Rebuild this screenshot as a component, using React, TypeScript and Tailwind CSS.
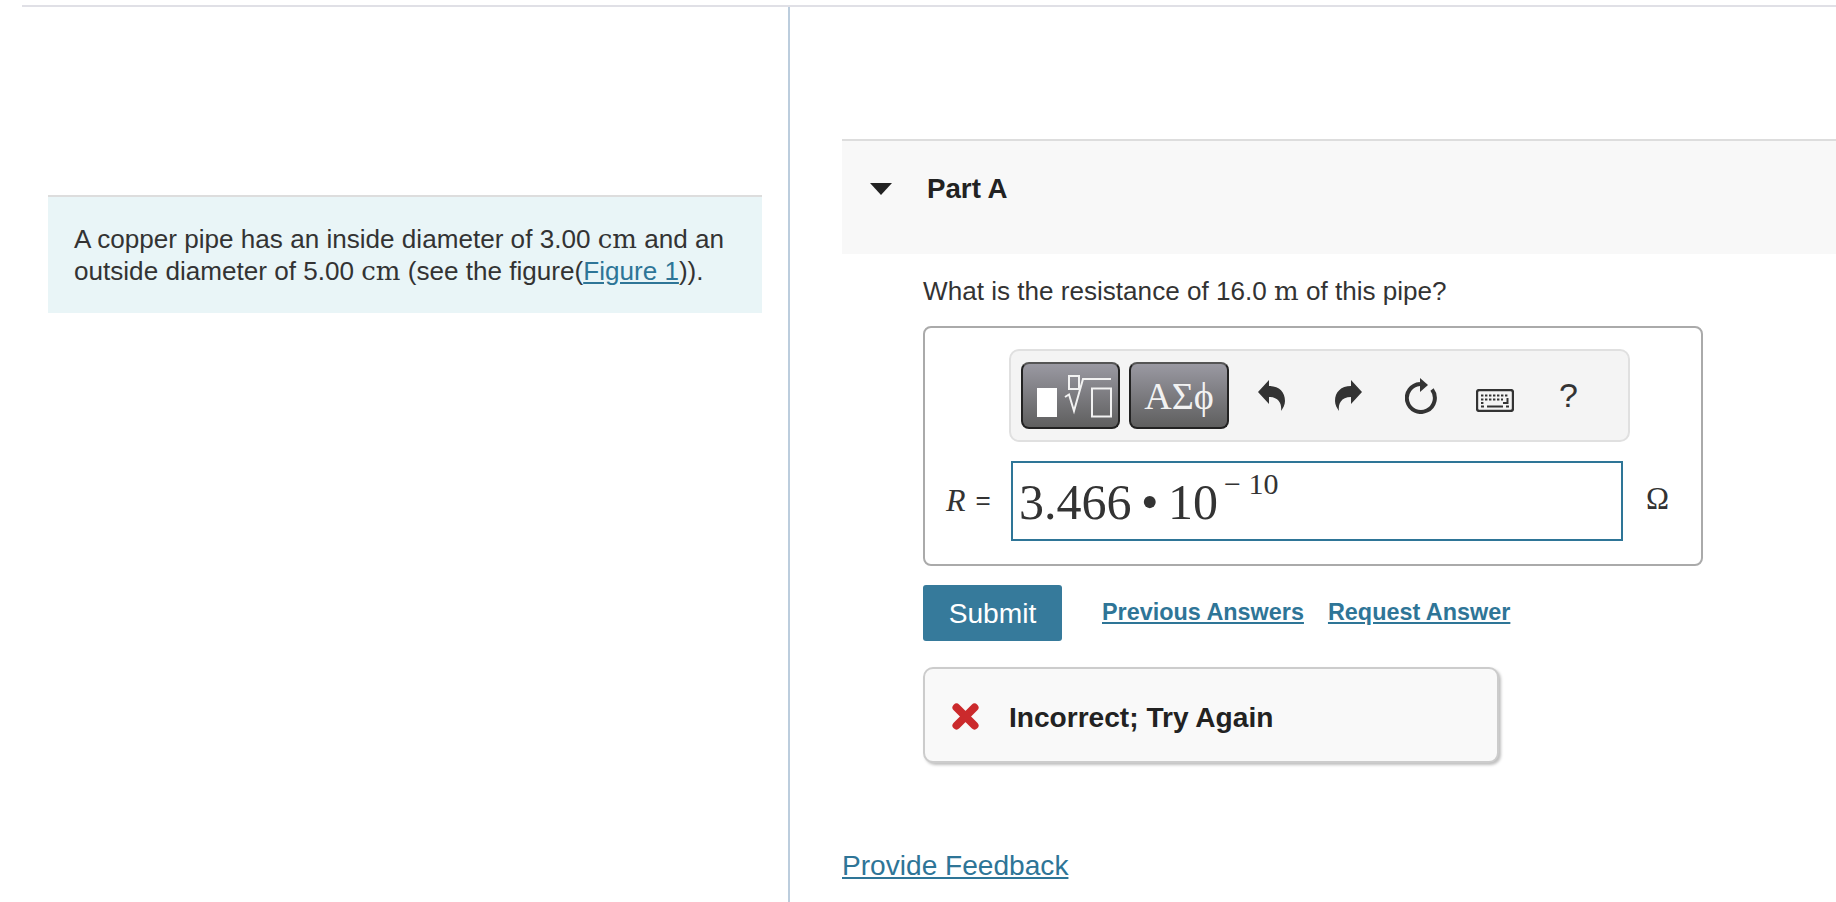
function Undo({ flip }: { flip?: boolean }) {
  return (
    <svg width="27" height="31" viewBox="0 0 27 31" className={flip ? "-scale-x-100" : ""}>
      <path d="M0 12 L11 0 V6 C21 6 27 12 27 21 C27 25 25 28 23 31 C24 24 21 17 11 17 V24 Z" fill="#333" />
    </svg>
  );
}

function Reset() {
  return (
    <svg width="32" height="36" viewBox="0 0 32 36">
      <path d="M15 6 A14 14 0 1 0 27 11.5" fill="none" stroke="#333" strokeWidth="4" />
      <path d="M15 0 L23 7 L15 14 Z" fill="#333" />
    </svg>
  );
}

function Keyboard() {
  return (
    <svg width="38" height="23" viewBox="0 0 38 23">
      <rect x="1" y="1" width="36" height="21" rx="2.5" fill="#f4f4f4" stroke="#333" strokeWidth="2.4" />
      <path d="M5 6.5H33M5 10.5H27M5 14H9" stroke="#333" strokeWidth="2" strokeDasharray="2.4 1.6" fill="none" />
      <path d="M5 17.5H8M11 17.5H27M30 17.5H33" stroke="#333" strokeWidth="2" fill="none" />
      <path d="M31.5 9V14H27" stroke="#333" strokeWidth="2" fill="none" />
    </svg>
  );
}

function Templates() {
  return (
    <svg width="76" height="46" viewBox="0 0 76 46" className="ml-[8px]">
      <rect x="0" y="15" width="20" height="29" fill="#fff" />
      <rect x="32" y="3" width="10" height="13" fill="none" stroke="#f2f2f2" strokeWidth="2" />
      <path d="M28 24 L32 21.5 L37 38 L46 6 H74" fill="none" stroke="#f2f2f2" strokeWidth="2" />
      <rect x="55" y="15.5" width="19" height="28" fill="none" stroke="#f2f2f2" strokeWidth="2" />
    </svg>
  );
}

function CrossMark() {
  return (
    <svg width="27" height="27" viewBox="0 0 27 27" className="mt-[2px]">
      <path d="M4.5 4.5 L22.5 22.5 M22.5 4.5 L4.5 22.5" stroke="#cb2a2c" strokeWidth="8" strokeLinecap="round" />
    </svg>
  );
}

export default function App() {
  return (
    <div className="w-[1836px] h-[902px] overflow-hidden bg-white text-[#333] text-[26.1px] leading-[32px] font-['Liberation_Sans',sans-serif]">
      <div className="ml-[22px] mt-[5px] h-[2px] bg-[#e0e0e6]" />
      <div className="flex h-[895px]">
        <div className="w-[790px] shrink-0 border-r-2 border-[#bccddd] pl-[48px] pt-[188px]">
          <div className="w-[714px] h-[118px] border-t-2 border-[#dddddd] bg-[#e9f5f7] pl-[26px] pt-[26px]">
            <p>
              A copper pipe has an inside diameter of 3.00 <span className="font-['DejaVu_Serif',serif] text-[26px]">cm</span> and an
              <br />
              outside diameter of 5.00 <span className="font-['DejaVu_Serif',serif] text-[26px]">cm</span> (see the figure(
              <a className="text-[#2e7597] underline">Figure 1</a>)).
            </p>
          </div>
        </div>
        <div className="flex-1 pl-[52px] pt-[132px]">
          <div className="h-[115px] border-t-2 border-[#dddddd] bg-[#f8f8f8] flex items-start pt-[32px]">
            <svg width="22" height="12" viewBox="0 0 22 12" className="ml-[28px] mt-[10px]">
              <path d="M0 0 H22 L11 12 Z" fill="#222" />
            </svg>
            <h2 className="ml-[35px] font-bold text-[#222] text-[27.7px]">Part A</h2>
          </div>
          <div className="pl-[81px]">
            <p className="mt-[21px]">
              What is the resistance of 16.0 <span className="font-['DejaVu_Serif',serif] text-[26px]">m</span> of this pipe?
            </p>
            <div className="mt-[19px] w-[780px] h-[240px] rounded-[8px] border-2 border-[#aaaaaa] pt-[21px]">
              <div className="ml-[84px] w-[621px] h-[93px] rounded-[10px] border-2 border-[#e0e0e0] bg-[#f4f4f4] flex items-center pl-[10px]">
                <button className="w-[99px] h-[67px] rounded-[8px] border-2 border-[#222] border-t-[#555] bg-gradient-to-b from-[#9a99a2] to-[#5f5f5f] flex items-center justify-center">
                  <Templates />
                </button>
                <button className="ml-[9px] w-[100px] h-[67px] rounded-[8px] border-2 border-[#222] border-t-[#555] bg-gradient-to-b from-[#9a99a2] to-[#5f5f5f] text-[#f2f2f2] text-[38px] font-['Liberation_Serif',serif]">
                  ΑΣϕ
                </button>
                <div className="ml-[29px] w-[27px] flex"><Undo /></div>
                <div className="ml-[50px] w-[27px] flex"><Undo flip /></div>
                <div className="ml-[43px] w-[32px] flex"><Reset /></div>
                <div className="ml-[39px] mt-[9px] w-[38px] flex"><Keyboard /></div>
                <span className="ml-[45px] mb-[2px] text-[34px]">?</span>
              </div>
              <div className="mt-[19px] flex items-center">
                <span className="ml-[21px] mb-[2px] w-[65px] flex items-center gap-[10px]">
                  <i className="font-['Liberation_Serif',serif] text-[32px]">R</i>
                  <span className="text-[26px]">=</span>
                </span>
                <div className="w-[612px] h-[80px] border-2 border-[#2e7597] pl-[6px] flex items-start font-['Liberation_Serif',serif]">
                  <span className="text-[50px] leading-[60px] mt-[9px] [word-spacing:-3px]">3.466 • 10</span>
                  <span className="text-[30px] leading-[36px] ml-[6px] mt-[3px]">− 10</span>
                </div>
                <span className="ml-[23px] mb-[4px] font-['Liberation_Serif',serif] text-[31px]">Ω</span>
              </div>
            </div>
            <div className="mt-[19px] flex items-center">
              <button className="w-[139px] h-[56px] rounded-[3px] bg-[#367a9b] text-white text-[28.2px]">Submit</button>
              <a className="ml-[40px] mb-[2px] text-[23.4px] font-bold text-[#2e7597] underline">Previous Answers</a>
              <a className="ml-[24px] mb-[2px] text-[23.4px] font-bold text-[#2e7597] underline">Request Answer</a>
            </div>
            <div className="mt-[26px] w-[576px] h-[96px] rounded-[10px] border-2 border-[#cccccc] bg-[#f9f9f9] shadow-[2px_2px_3px_rgba(0,0,0,0.25)] flex items-center pl-[27px]">
              <CrossMark />
              <span className="ml-[30px] mt-[5px] font-bold text-[#222] text-[28.1px]">Incorrect; Try Again</span>
            </div>
          </div>
          <a className="block mt-[87px] text-[#2e7597] underline text-[28.1px]">Provide Feedback</a>
        </div>
      </div>
    </div>
  );
}
